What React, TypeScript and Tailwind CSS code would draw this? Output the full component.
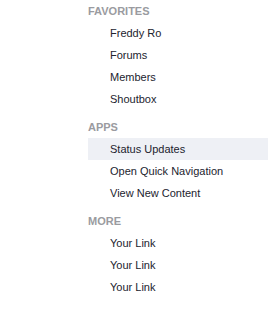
import React from 'react';

const sections = [
  { title: 'FAVORITES', links: ['Freddy Ro', 'Forums', 'Members', 'Shoutbox'] },
  { title: 'APPS', links: ['Status Updates', 'Open Quick Navigation', 'View New Content'] },
  { title: 'MORE', links: ['Your Link', 'Your Link', 'Your Link'] },
];

export default function App() {
  return (
    <div className="w-[268px] h-[329px] bg-white pl-[88px] font-['Tahoma','Liberation_Sans',sans-serif] text-[11px]">
      {sections.map((section) => (
        <div key={section.title} className="pb-[6px]">
          <h3 className="h-[22px] flex items-center font-bold text-[#9a9ba0]">{section.title}</h3>
          <ul>
            {section.links.map((link, i) => (
              <li
                key={link + i}
                className={
                  'h-[22px] flex items-center pl-[22px] text-[#22232e] ' +
                  (link === 'Status Updates' ? 'bg-[#eef0f5]' : '')
                }>
                {link}
              </li>
            ))}
          </ul>
        </div>
      ))}
    </div>
  );
}
